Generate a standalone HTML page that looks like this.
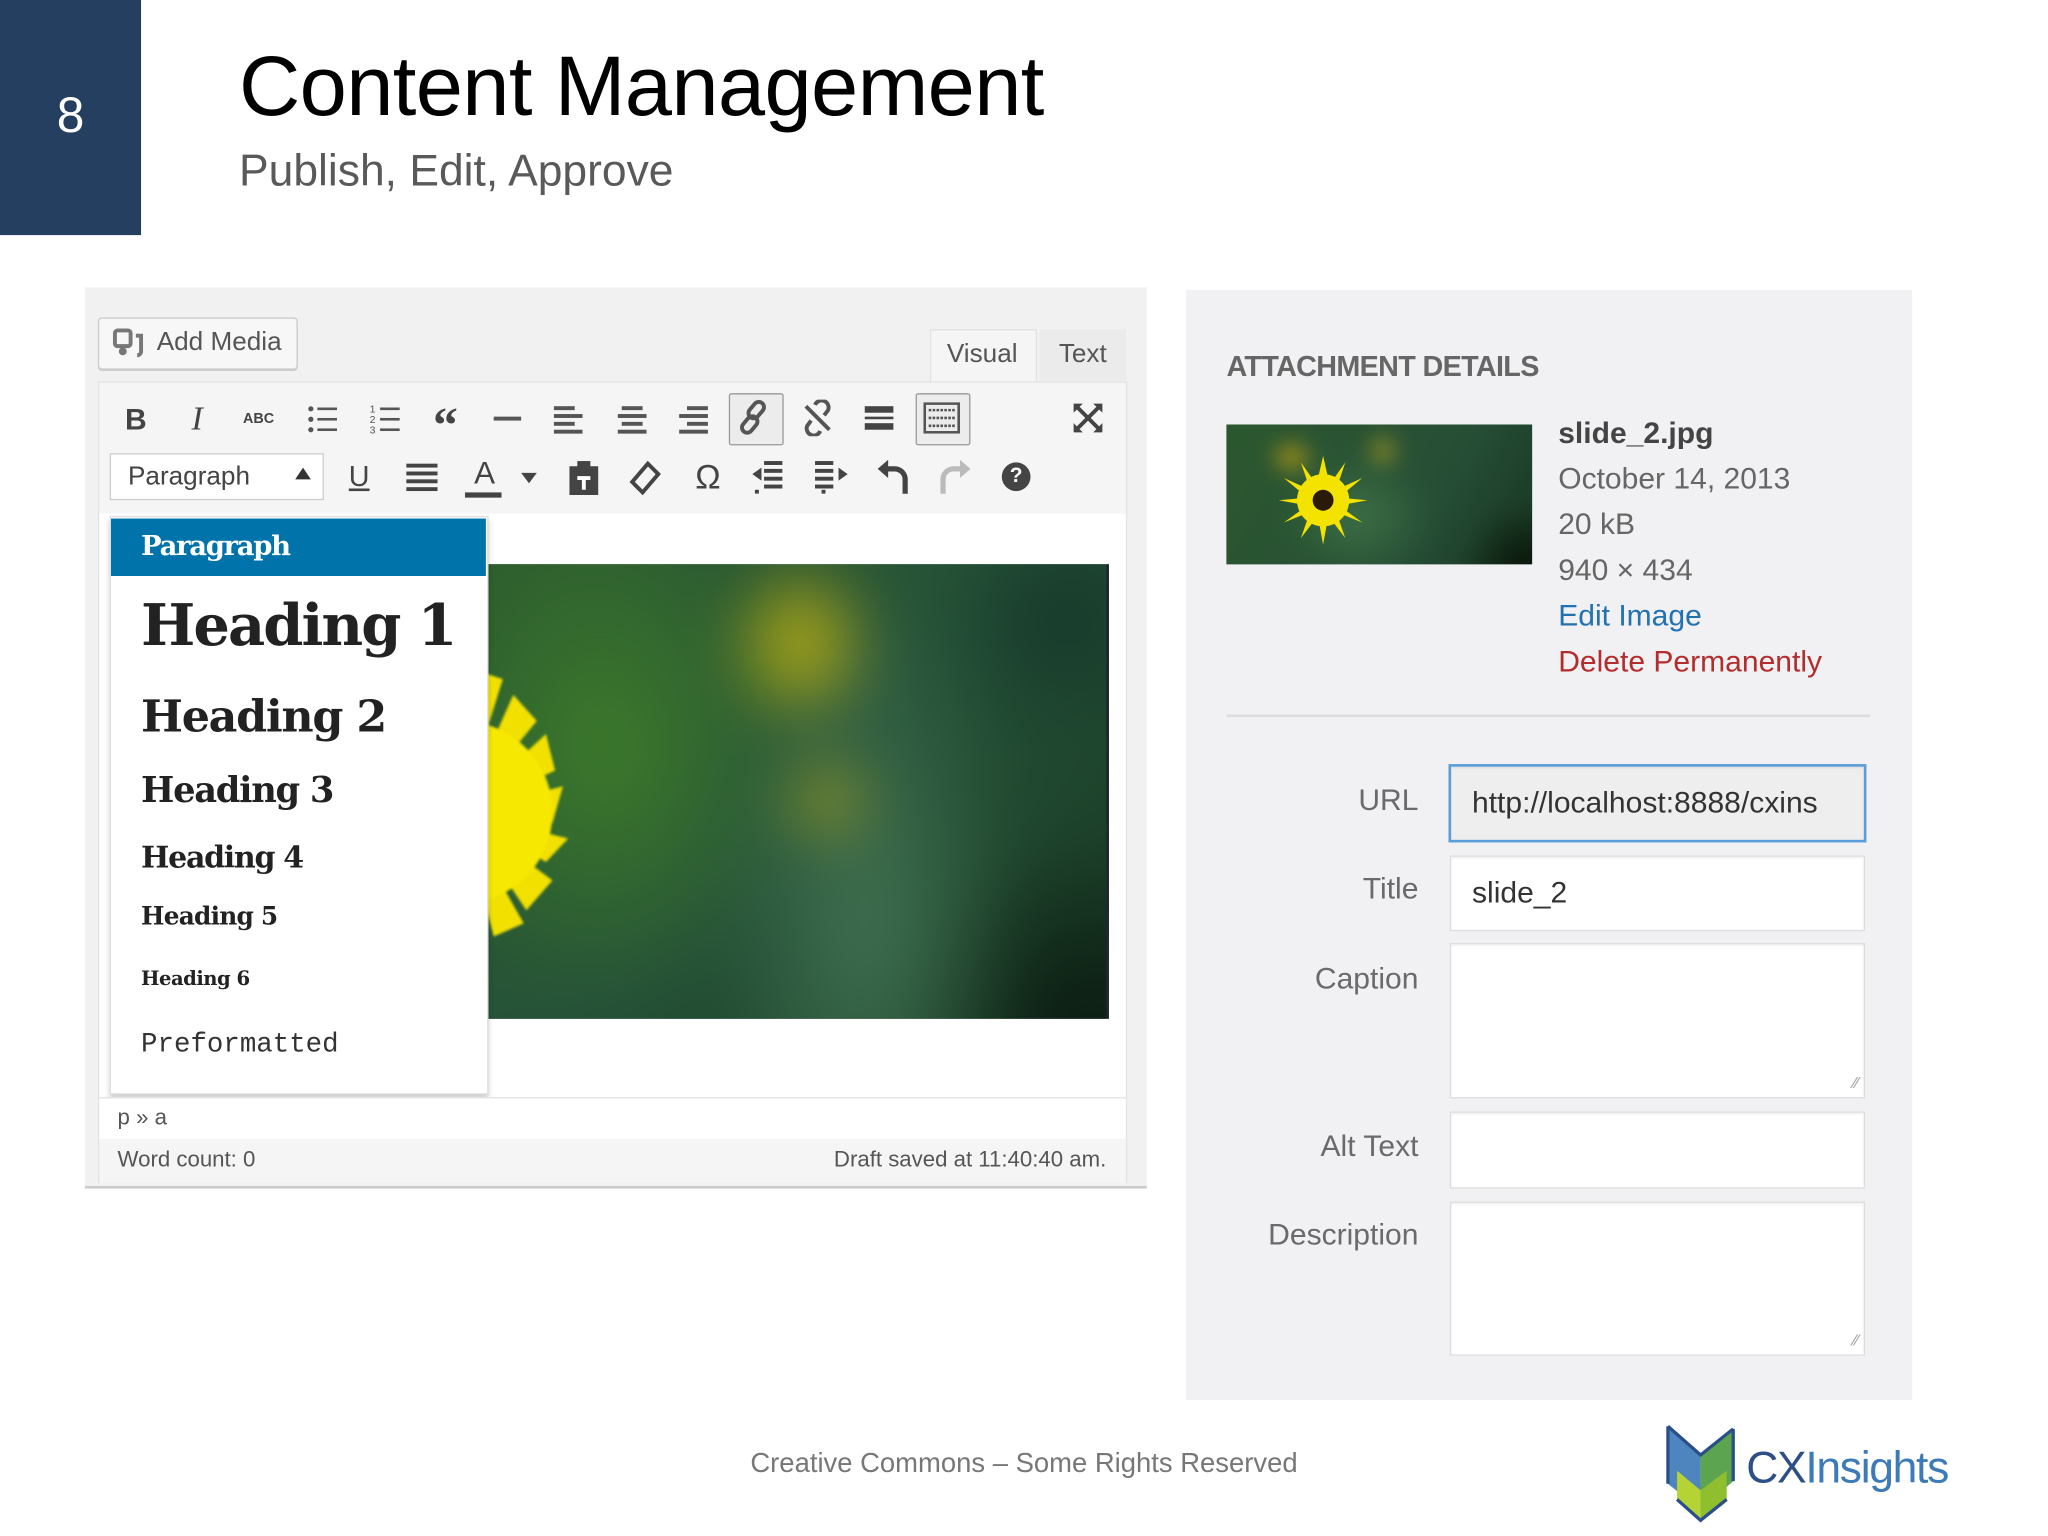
<!DOCTYPE html>
<html><head><meta charset="utf-8">
<style>
html,body{margin:0;padding:0;background:#fff;width:2048px;height:1536px;overflow:hidden}
#s{position:absolute;left:0;top:0;width:1568px;height:1176px;transform:scale(1.306122);transform-origin:0 0;font-family:"Liberation Sans",sans-serif}
.a{position:absolute}
.ic{position:absolute;color:#444;font-size:20px;text-align:center;width:30px;line-height:30px}
.lbl{position:absolute;right:482px;width:200px;text-align:right;color:#6a6a6a;font-size:23px}
.inp{position:absolute;left:1110px;width:316px;background:#fff;border:1px solid #ddd;box-shadow:inset 0 1px 2px rgba(0,0,0,.07)}
.hd{position:absolute;left:108px;font-family:"DejaVu Serif","Liberation Serif",serif;font-weight:bold;color:#222;white-space:nowrap}
.meta{position:absolute;left:1193px;font-size:23px;color:#666;white-space:nowrap}
</style></head><body><div id="s">
<!-- header -->
<div class="a" style="left:0;top:0;width:108px;height:180px;background:#243f60"></div>
<div class="a" style="left:0;top:68px;width:108px;text-align:center;color:#fff;font-size:38px">8</div>
<div class="a" style="left:183px;top:28px;font-size:65px;color:#000;white-space:nowrap;letter-spacing:-0.5px">Content Management</div>
<div class="a" style="left:183px;top:112px;font-size:34px;color:#595959;white-space:nowrap">Publish, Edit, Approve</div>

<!-- editor panel -->
<div class="a" style="left:65px;top:220px;width:813px;height:688px;background:#f1f1f1;border-bottom:2px solid #ccc"></div>
<div class="a" style="left:75px;top:243px;width:151px;height:38px;background:#f7f7f7;border:1px solid #ccc;border-radius:3px;box-shadow:0 1px 0 #ccc"></div>
<svg class="a" style="left:86px;top:251px" width="26" height="24" viewBox="0 0 26 24"><rect x="2" y="2" width="12" height="12" rx="2" fill="none" stroke="#777" stroke-width="3"/><circle cx="8" cy="18" r="3" fill="#777"/><path d="M18 6h4v12a3 3 0 0 1-3 3" fill="none" stroke="#777" stroke-width="3"/></svg>
<div class="a" style="left:120px;top:251px;font-size:20px;color:#555">Add Media</div>
<div class="a" style="left:712px;top:252px;width:80px;height:40px;background:#f5f5f5;border:1px solid #e2e2e2;border-bottom:none"></div>
<div class="a" style="left:712px;top:260px;width:80px;text-align:center;font-size:20px;color:#555">Visual</div>
<div class="a" style="left:796px;top:252px;width:66px;height:40px;background:#ebebeb"></div>
<div class="a" style="left:796px;top:260px;width:66px;text-align:center;font-size:20px;color:#555">Text</div>
<div class="a" style="left:75px;top:292px;width:786px;height:100px;background:#f5f5f5;border:1px solid #e2e2e2;border-bottom:1px solid #ddd"></div>
<!-- row1 icons -->
<div class="ic" style="left:89px;top:306px;font-weight:bold;font-size:23px">B</div>
<div class="ic" style="left:136px;top:306px;font-style:italic;font-family:'Liberation Serif',serif;font-size:26px">I</div>
<div class="ic" style="left:183px;top:306px;font-size:11px;font-weight:bold">ABC</div>
<svg class="a" style="left:234px;top:309px" width="26" height="24"><g fill="#555"><circle cx="4" cy="4" r="2"/><circle cx="4" cy="12" r="2"/><circle cx="4" cy="20" r="2"/><rect x="9" y="3" width="15" height="2"/><rect x="9" y="11" width="15" height="2"/><rect x="9" y="19" width="15" height="2"/></g></svg>
<svg class="a" style="left:282px;top:309px" width="26" height="24"><g fill="#555" font-size="8" font-family="Liberation Sans"><text x="1" y="7">1</text><text x="1" y="15">2</text><text x="1" y="23">3</text><rect x="9" y="3" width="15" height="2"/><rect x="9" y="11" width="15" height="2"/><rect x="9" y="19" width="15" height="2"/></g></svg>
<div class="ic" style="left:326px;top:304px;font-size:38px;font-weight:bold;font-family:'Liberation Serif',serif;line-height:44px">“</div>
<div class="a" style="left:378px;top:319px;width:21px;height:3px;background:#555"></div>
<svg class="a" style="left:424px;top:309px" width="24" height="24"><g fill="#555"><rect x="0" y="2" width="16" height="3"/><rect x="0" y="8" width="22" height="3"/><rect x="0" y="14" width="16" height="3"/><rect x="0" y="20" width="22" height="3"/></g></svg>
<svg class="a" style="left:472px;top:309px" width="24" height="24"><g fill="#555"><rect x="4" y="2" width="16" height="3"/><rect x="1" y="8" width="22" height="3"/><rect x="4" y="14" width="16" height="3"/><rect x="1" y="20" width="22" height="3"/></g></svg>
<svg class="a" style="left:519px;top:309px" width="24" height="24"><g fill="#555"><rect x="7" y="2" width="16" height="3"/><rect x="1" y="8" width="22" height="3"/><rect x="7" y="14" width="16" height="3"/><rect x="1" y="20" width="22" height="3"/></g></svg>
<div class="a" style="left:558px;top:301px;width:40px;height:38px;border:1px solid #999;background:#ececec;border-radius:2px"></div>
<svg class="a" style="left:565px;top:306px" width="28" height="28"><g fill="none" stroke="#555" stroke-width="3"><rect x="10" y="1" width="8" height="14" rx="4" transform="rotate(40 14 8)"/><rect x="5" y="12" width="8" height="14" rx="4" transform="rotate(40 9 19)"/></g></svg>
<svg class="a" style="left:612px;top:306px" width="28" height="28"><g fill="none" stroke="#555" stroke-width="3"><path d="M12 4a5 5 0 0 1 10 4l-3 4M16 24a5 5 0 0 1-10-4l3-4M5 5l18 18"/></g></svg>
<svg class="a" style="left:662px;top:309px" width="24" height="24"><g fill="#444"><rect x="0" y="2" width="22" height="5"/><rect x="0" y="10" width="22" height="2"/><rect x="0" y="15" width="22" height="5"/></g></svg>
<div class="a" style="left:701px;top:301px;width:40px;height:38px;border:1px solid #999;background:#ececec;border-radius:2px"></div>
<svg class="a" style="left:707px;top:308px" width="28" height="24"><g fill="none" stroke="#555" stroke-width="2"><rect x="1" y="1" width="26" height="22"/><path d="M4 6h20M4 12h20M4 18h20" stroke-dasharray="2 1"/></g></svg>
<svg class="a" style="left:820px;top:307px" width="26" height="26"><g stroke="#444" stroke-width="3" fill="#444"><path d="M5 5l16 16M21 5L5 21"/><path d="M2 2h7l-7 7zM24 2h-7l7 7zM2 24h7l-7-7zM24 24h-7l7-7z" stroke-width="0"/></g></svg>
<!-- row2 -->
<div class="a" style="left:84px;top:347px;width:162px;height:34px;background:#fff;border:1px solid #ccc"></div>
<div class="a" style="left:98px;top:354px;font-size:20px;color:#444">Paragraph</div>
<div class="a" style="left:226px;top:358px;width:0;height:0;border-left:6px solid transparent;border-right:6px solid transparent;border-bottom:9px solid #333"></div>
<div class="ic" style="left:260px;top:350px;font-size:22px;text-decoration:underline">U</div>
<svg class="a" style="left:311px;top:354px" width="24" height="22"><g fill="#444"><rect y="1" width="24" height="3"/><rect y="7" width="24" height="3"/><rect y="13" width="24" height="3"/><rect y="19" width="24" height="3"/></g></svg>
<div class="ic" style="left:356px;top:348px;font-size:24px">A</div>
<div class="a" style="left:356px;top:377px;width:28px;height:4px;background:#444"></div>
<div class="a" style="left:399px;top:362px;width:0;height:0;border-left:6px solid transparent;border-right:6px solid transparent;border-top:8px solid #444"></div>
<svg class="a" style="left:434px;top:352px" width="26" height="28"><path d="M2 5h22v22H2z" fill="#444"/><rect x="8" y="1" width="10" height="7" fill="#444"/><path d="M8 14h10M13 14v9" stroke="#fff" stroke-width="3"/></svg>
<svg class="a" style="left:480px;top:352px" width="26" height="28"><path d="M16 3l8 8-12 14-8-8z" fill="none" stroke="#444" stroke-width="3"/></svg>
<div class="ic" style="left:527px;top:350px;font-size:26px">Ω</div>
<svg class="a" style="left:575px;top:352px" width="26" height="26"><g fill="#444"><rect x="10" y="1" width="14" height="3"/><rect x="10" y="7" width="14" height="3"/><rect x="10" y="13" width="14" height="3"/><rect x="10" y="19" width="14" height="3"/><rect x="3" y="23" width="3" height="3"/><path d="M1 11l7-5v10z"/></g></svg>
<svg class="a" style="left:624px;top:352px" width="26" height="26"><g fill="#444"><rect x="0" y="1" width="14" height="3"/><rect x="0" y="7" width="14" height="3"/><rect x="0" y="13" width="14" height="3"/><rect x="0" y="19" width="14" height="3"/><rect x="5" y="23" width="3" height="3"/><path d="M25 11l-7-5v10z"/></g></svg>
<svg class="a" style="left:671px;top:351px" width="26" height="28"><path d="M22 27V16a8 8 0 0 0-8-8H6" fill="none" stroke="#444" stroke-width="4"/><path d="M1 8l8-7v14z" fill="#444"/></svg>
<svg class="a" style="left:718px;top:351px" width="26" height="28"><path d="M4 27V16a8 8 0 0 1 8-8h8" fill="none" stroke="#bbb" stroke-width="4"/><path d="M25 8l-8-7v14z" fill="#bbb"/></svg>
<div class="a" style="left:767px;top:354px;width:22px;height:22px;border-radius:50%;background:#444;color:#fff;font-weight:bold;font-size:16px;text-align:center;line-height:22px">?</div>

<!-- content -->
<div class="a" style="left:75px;top:393px;width:786px;height:447px;background:#fff;border-left:1px solid #e2e2e2;border-right:1px solid #e2e2e2"></div>
<div class="a" style="left:373px;top:432px;width:474px;height:348px;overflow:hidden;background:#1f4a2a;border-right:2px solid #223">
  <div class="a" style="left:-60px;top:-60px;width:600px;height:470px;filter:blur(22px);background:
   radial-gradient(ellipse 60px 70px at 300px 120px,#c8b810 0%,rgba(200,184,16,.6) 40%,transparent 100%),
   radial-gradient(ellipse 40px 40px at 320px 240px,#9a9a20 0%,transparent 100%),
   radial-gradient(ellipse 150px 200px at 150px 200px,#3d7a2a 0%,transparent 100%),
   radial-gradient(ellipse 120px 260px at 350px 330px,#3f7050 0%,transparent 100%),
   radial-gradient(ellipse 150px 150px at 520px 420px,#0a1a10 0%,transparent 100%),
   radial-gradient(ellipse 100px 100px at 500px 100px,#16382a 0%,transparent 100%),
   linear-gradient(135deg,#2e5e2c,#255238 50%,#14301c)"></div>
  <svg class="a" style="left:-120px;top:70px;filter:blur(1px)" width="200" height="240" viewBox="0 0 200 240">
   <g fill="#f2e000"><path d="M100 120 L178 100 L170 128Z"/><path d="M100 120 L182 140 L165 158Z"/><path d="M100 120 L165 60 L172 88Z"/><path d="M100 120 L150 195 L170 172Z"/><path d="M100 120 L140 30 L158 50Z"/><path d="M100 120 L125 215 L148 205Z"/><path d="M100 120 L108 10 L132 18Z"/></g>
   <circle cx="100" cy="120" r="70" fill="#f6e800"/>
  </svg>
</div>
<!-- dropdown -->
<div class="a" style="left:84px;top:395px;width:288px;height:441px;background:#fff;border:1px solid #ddd;box-shadow:0 3px 4px rgba(0,0,0,.2)"></div>
<div class="a" style="left:85px;top:397px;width:287px;height:44px;background:#0073aa"></div>
<div class="a" style="left:108px;top:405px;font-family:'DejaVu Serif','Liberation Serif',serif;font-weight:bold;color:#fff;font-size:21px;letter-spacing:-1px">Paragraph</div>
<div class="hd" style="top:454px;font-size:44px;letter-spacing:-1.5px">Heading 1</div>
<div class="hd" style="top:529px;font-size:34px;letter-spacing:-1px">Heading 2</div>
<div class="hd" style="top:590px;font-size:27px;letter-spacing:-1px">Heading 3</div>
<div class="hd" style="top:643px;font-size:23px;letter-spacing:-1px">Heading 4</div>
<div class="hd" style="top:691px;font-size:19px;letter-spacing:-.6px">Heading 5</div>
<div class="hd" style="top:740px;font-size:15px;letter-spacing:-.4px">Heading 6</div>
<div class="a" style="left:108px;top:789px;font-family:'Liberation Mono',monospace;font-size:21px;color:#333">Preformatted</div>
<!-- status -->
<div class="a" style="left:75px;top:840px;width:786px;height:31px;background:#fff;border:1px solid #e2e2e2"></div>
<div class="a" style="left:90px;top:846px;font-size:17px;color:#555">p » a</div>
<div class="a" style="left:75px;top:872px;width:786px;height:34px;background:#f5f5f5;border-left:1px solid #e2e2e2;border-right:1px solid #e2e2e2"></div>
<div class="a" style="left:90px;top:878px;font-size:17px;color:#555">Word count: 0</div>
<div class="a" style="left:560px;top:878px;width:287px;text-align:right;font-size:17px;color:#555">Draft saved at 11:40:40 am.</div>

<!-- attachment panel -->
<div class="a" style="left:908px;top:222px;width:556px;height:850px;background:#f1f1f3"></div>
<div class="a" style="left:939px;top:268px;font-size:22px;font-weight:bold;color:#666;letter-spacing:-.5px">ATTACHMENT DETAILS</div>
<div class="a" style="left:939px;top:325px;width:234px;height:107px;overflow:hidden;background:#22482c">
  <div class="a" style="left:-30px;top:-30px;width:300px;height:170px;filter:blur(8px);background:
   radial-gradient(ellipse 18px 14px at 80px 55px,#d0a810,transparent),
   radial-gradient(ellipse 14px 14px at 150px 50px,#b0a020,transparent),
   radial-gradient(ellipse 60px 50px at 130px 100px,#3c6e44,transparent),
   radial-gradient(ellipse 50px 50px at 260px 140px,#081408,transparent),
   linear-gradient(120deg,#2d5a2c,#264e36 60%,#112a18)"></div>
  <svg class="a" style="left:38px;top:22px" width="72" height="72" viewBox="-36 -36 72 72">
   <g fill="#f4e200">
    <polygon points="0,-34 5,-12 17,-29 10,-8 30,-17 12,-2 34,0 12,4 30,17 10,9 17,29 4,12 0,34 -4,12 -17,29 -10,9 -30,17 -12,4 -34,0 -12,-2 -30,-17 -10,-8 -17,-29 -5,-12"/>
    <circle r="20"/></g>
   <circle r="8" fill="#2a1a08"/>
  </svg>
</div>
<div class="meta" style="top:318px;font-weight:bold;color:#444">slide_2.jpg</div>
<div class="meta" style="top:353px">October 14, 2013</div>
<div class="meta" style="top:388px">20 kB</div>
<div class="meta" style="top:423px">940 × 434</div>
<div class="meta" style="top:458px;color:#2271b1">Edit Image</div>
<div class="meta" style="top:493px;color:#b32d2e">Delete Permanently</div>
<div class="a" style="left:939px;top:547px;width:493px;height:2px;background:#ddd"></div>

<div class="lbl" style="top:599px">URL</div>
<div class="lbl" style="top:667px">Title</div>
<div class="lbl" style="top:736px">Caption</div>
<div class="lbl" style="top:864px">Alt Text</div>
<div class="lbl" style="top:932px">Description</div>
<div class="inp" style="top:585px;height:56px;background:#eee;border:2px solid #5b9dd9;width:316px;left:1109px;overflow:hidden"><div style="position:absolute;left:16px;top:14px;font-size:23px;color:#333;white-space:nowrap">http://localhost:8888/cxins</div></div>
<div class="inp" style="top:655px;height:56px"><div style="position:absolute;left:16px;top:14px;font-size:23px;color:#333">slide_2</div></div>
<div class="inp" style="top:722px;height:117px"><div style="position:absolute;right:4px;bottom:4px;color:#999;font-size:12px">⁄⁄</div></div>
<div class="inp" style="top:851px;height:57px"></div>
<div class="inp" style="top:920px;height:116px"><div style="position:absolute;right:4px;bottom:4px;color:#999;font-size:12px">⁄⁄</div></div>

<!-- footer -->
<div class="a" style="left:484px;top:1109px;width:600px;text-align:center;font-size:21px;color:#777">Creative Commons – Some Rights Reserved</div>
<svg class="a" style="left:1272px;top:1086px" width="64" height="82" viewBox="0 0 64 82">
 <path d="M5 6 L30 28 L30 70 L5 50Z" fill="#3b78b8" opacity=".9"/>
 <path d="M55 8 L30 28 L30 70 L55 48Z" fill="#4a9a3c" opacity=".9"/>
 <path d="M12 40 L30 55 L30 78 L12 62Z" fill="#b6d335"/>
 <path d="M50 40 L30 55 L30 78 L50 62Z" fill="#8fbf2f"/>
 <path d="M5 6 L30 28 L55 8 M5 6 V50 M55 8 V48 M12 62 L30 78 L50 62" fill="none" stroke="#2a4f88" stroke-width="2.5"/>
</svg>
<div class="a" style="left:1337px;top:1105px;font-size:34px;color:#2e4e86;letter-spacing:-1px">CX<span style="color:#3d7ab8">Insights</span></div>
</div></body></html>
